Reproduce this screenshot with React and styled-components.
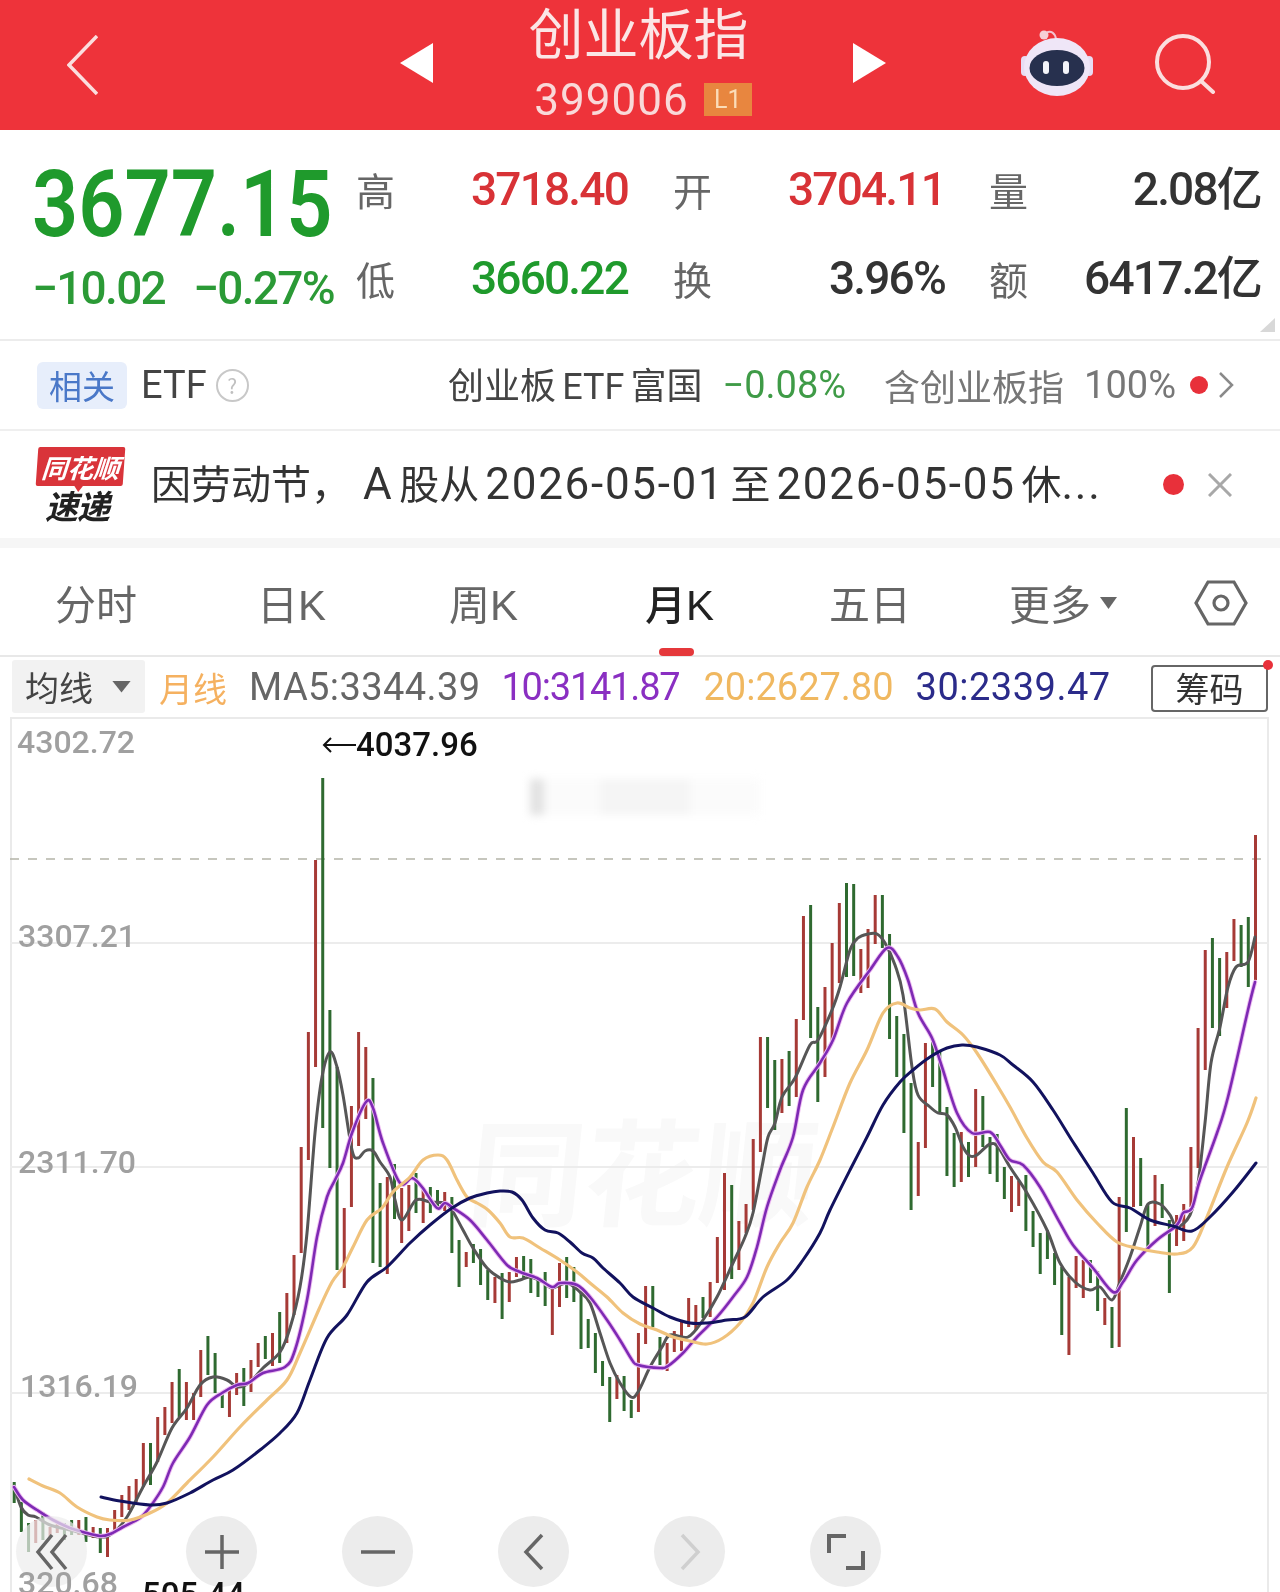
import React from "react";
import styled, { createGlobalStyle } from "styled-components";

const CJK = `"Noto Sans CJK SC", "Noto Sans", sans-serif`;
const NUM = `"Roboto", "Liberation Sans", "Noto Sans CJK SC", sans-serif`;

const Global = createGlobalStyle`
  html, body { margin: 0; padding: 0; background: #fff; }
  body { font-family: ${CJK}; }
`;

const Page = styled.div`
  width: 1280px;
  height: 1592px;
  overflow: hidden;
  background: #fff;
  position: relative;
  filter: blur(0.35px);
`;

/* ---------- Header ---------- */
const Header = styled.header`
  height: 130px;
  background: #ee333a;
  display: flex;
  align-items: center;
  color: #fbe6e6;
`;
const HeadIcon = styled.svg`
  display: block;
  flex: none;
  margin-left: ${(p) => p.$ml}px;
  margin-top: ${(p) => p.$mt || 0}px;
`;
const TitleBlock = styled.div`
  width: 420px;
  height: 130px;
  flex: none;
  display: flex;
  flex-direction: column;
  align-items: center;
  box-sizing: border-box;
`;
const Title = styled.div`
  font-size: 55px;
  line-height: 60px;
  margin-left: -9px;
  color: #fbe6e6;
  font-weight: 400;
`;
const CodeRow = styled.div`
  display: flex;
  align-items: flex-start;
  margin-top: 22px;
  gap: 15px;
`;
const Code = styled.span`
  font-family: ${NUM};
  font-size: 44px;
  line-height: 36px;
  letter-spacing: 1px;
  color: #f9d9d9;
`;
const Level = styled.span`
  width: 48px;
  height: 33px;
  margin-top: 1px;
  background: #e8863f;
  color: #fbdcb8;
  font-family: ${NUM};
  font-size: 25px;
  line-height: 33px;
  text-align: center;
`;

/* ---------- Quote ---------- */
const Quote = styled.section`
  height: 211px;
  box-sizing: border-box;
  border-bottom: 2px solid #ececec;
  display: flex;
  position: relative;
`;
const PriceBlock = styled.div`
  width: 352px;
  flex: none;
  padding: 28px 0 0 32px;
  box-sizing: border-box;
`;
const Price = styled.div`
  font-family: ${NUM};
  font-weight: 600;
  font-size: 92px;
  line-height: 94px;
  color: #1f9a2c;
  white-space: nowrap;
  transform: scaleX(0.88);
  transform-origin: left center;
`;
const Change = styled.div`
  display: flex;
  gap: 28px;
  margin-top: 16px;
  font-family: ${NUM};
  font-size: 46px;
  line-height: 40px;
  letter-spacing: -1.7px;
  font-weight: 500;
  color: #2b9a36;
  white-space: nowrap;
`;
const Stats = styled.div`
  display: grid;
  grid-template-columns: 43px 233px 84px 233px 83px 233px;
  grid-auto-rows: 89px;
  padding-top: 14px;
  align-items: center;
`;
const StatLabel = styled.span`
  font-size: 39px;
  color: #666;
  text-align: right;
  line-height: 44px;
`;
const StatValue = styled.span`
  font-family: ${NUM};
  font-size: 46px;
  font-weight: 500;
  line-height: 50px;
  letter-spacing: -1.8px;
  text-align: right;
  white-space: nowrap;
  color: ${(p) => p.$color};
`;
const Corner = styled.i`
  position: absolute;
  right: 5px;
  bottom: 7px;
  width: 15px;
  height: 14px;
  background: #d8d8d8;
  clip-path: polygon(100% 0, 100% 100%, 0 100%);
`;

/* ---------- ETF row ---------- */
const EtfRow = styled.section`
  height: 90px;
  box-sizing: border-box;
  border-bottom: 2px solid #efefef;
  display: flex;
  align-items: center;
  padding: 0 46px 0 37px;
  font-size: 36px;
  white-space: nowrap;
`;
const Tag = styled.span`
  width: 90px;
  height: 47px;
  border-radius: 6px;
  background: #e7eefb;
  color: #4a78c8;
  font-size: 33px;
  line-height: 47px;
  text-align: center;
`;
const EtfText = styled.span`
  color: ${(p) => p.$color || "#444"};
  margin-left: ${(p) => p.$ml || 0}px;
  font-family: ${(p) => (p.$num ? NUM : CJK)};
  font-size: ${(p) => (p.$num ? 38 : 36)}px;
  line-height: 44px;
`;
const Help = styled.span`
  width: 29px;
  height: 29px;
  border: 2px solid #c8c8c8;
  border-radius: 50%;
  margin-left: 9px;
  color: #c0c0c0;
  font-size: 21px;
  line-height: 29px;
  text-align: center;
`;
const RedDot = styled.i`
  display: block;
  flex: none;
  width: ${(p) => p.$size}px;
  height: ${(p) => p.$size}px;
  border-radius: 50%;
  background: #e8303a;
  margin-left: ${(p) => p.$ml || 0}px;
`;
const FundGroup = styled.div`
  margin-left: auto;
  display: flex;
  align-items: center;
`;
const FundLatin = styled.span`
  font-family: ${NUM};
  font-size: 36px;
  margin: 0 -2px;
`;

/* ---------- News row ---------- */
const NewsRow = styled.section`
  height: 117px;
  box-sizing: border-box;
  border-bottom: 10px solid #f6f6f6;
  display: flex;
  align-items: center;
  padding-left: 37px;
`;
const Logo = styled.div`
  width: 87px;
  flex: none;
  display: flex;
  flex-direction: column;
  align-items: center;
  margin-top: -2px;
`;
const LogoFlag = styled.div`
  width: 87px;
  height: 39px;
  background: #d9343a;
  color: #fff;
  font-size: 26px;
  font-weight: 700;
  font-style: italic;
  line-height: 39px;
  text-align: center;
  border-radius: 2px;
  transform: skewX(-4deg);
  position: relative;
  &::after {
    content: "";
    position: absolute;
    left: 38px;
    bottom: -6px;
    width: 10px;
    height: 7px;
    background: #d9343a;
    clip-path: polygon(0 0, 100% 0, 50% 100%);
  }
`;
const LogoText = styled.div`
  font-size: 33px;
  font-weight: 700;
  font-style: italic;
  color: #222;
  line-height: 32px;
  margin: 3px 7px 0 0;
  letter-spacing: -1px;
`;
const NewsText = styled.div`
  margin-left: 27px;
  margin-top: -4px;
  width: 985px;
  font-size: 40px;
  color: #333;
  line-height: 50px;
  white-space: nowrap;
  word-spacing: -3px;
`;
const NewsNum = styled.span`
  font-family: ${NUM};
  font-size: 44px;
  letter-spacing: 1.7px;
  margin-left: ${(p) => p.$ml || 0}px;
`;

/* ---------- Tabs ---------- */
const Tabs = styled.nav`
  height: 109px;
  box-sizing: border-box;
  border-bottom: 2px solid #e8e8e8;
  display: flex;
  align-items: flex-start;
  padding-top: 30px;
`;
const Tab = styled.div`
  position: relative;
  flex: none;
  width: ${(p) => p.$w}px;
  margin-left: ${(p) => p.$ml}px;
  font-size: 41px;
  line-height: 48px;
  white-space: nowrap;
  color: ${(p) => (p.$active ? "#222" : "#666")};
  font-weight: ${(p) => (p.$active ? 500 : 400)};
`;
const TabLatin = styled.span`
  font-family: "Liberation Sans", sans-serif;
  font-size: 42px;
`;
const Underline = styled.i`
  position: absolute;
  left: 14px;
  top: 70px;
  width: 35px;
  height: 8px;
  border-radius: 4px;
  background: #e5383b;
`;
const Caret = styled.i`
  position: absolute;
  right: 2px;
  top: 19px;
  width: 17px;
  height: 12px;
  background: #666;
  clip-path: polygon(0 0, 100% 0, 50% 100%);
`;

/* ---------- MA bar ---------- */
const MaBar = styled.div`
  height: 60px;
  display: flex;
  align-items: center;
  position: relative;
`;
const MaSelect = styled.div`
  position: relative;
  width: 133px;
  height: 53px;
  margin-left: 12px;
  margin-top: -2px;
  background: #f2f2f2;
  border-radius: 3px;
  color: #444;
  font-size: 34px;
  line-height: 53px;
  padding-left: 13px;
  box-sizing: border-box;
  &::after {
    content: "";
    position: absolute;
    left: 100px;
    top: 21px;
    width: 19px;
    height: 12px;
    background: #666;
    clip-path: polygon(0 0, 100% 0, 50% 100%);
  }
`;
const MaValue = styled.span`
  margin-left: ${(p) => p.$ml}px;
  color: ${(p) => p.$color};
  font-family: ${(p) => (p.$cjk ? CJK : NUM)};
  font-size: ${(p) => (p.$cjk ? 34 : 38)}px;
  white-space: nowrap;
  letter-spacing: ${(p) => p.$ls || 0}px;
`;
const ChipButton = styled.div`
  position: absolute;
  left: 1151px;
  top: 8px;
  width: 117px;
  height: 47px;
  box-sizing: border-box;
  border: 2px solid #666;
  border-radius: 4px;
  text-align: center;
  font-size: 34px;
  line-height: 42px;
  color: #333;
  &::after {
    content: "";
    position: absolute;
    right: -7px;
    top: -7px;
    width: 10px;
    height: 10px;
    border-radius: 50%;
    background: #e8303a;
  }
`;

/* ---------- Chart ---------- */
const ChartBox = styled.section`
  position: relative;
  margin-left: 10px;
  width: 1259px;
  height: 875px;
  box-sizing: border-box;
  border: 2px solid #eaeaea;
  border-bottom: 0;
`;
const ChartSvg = styled.svg`
  position: absolute;
  left: -2px;
  top: -2px;
  width: 1259px;
  height: 875px;
  display: block;
`;
const Watermark = styled.div`
  position: absolute;
  left: 458px;
  top: 382px;
  font-size: 116px;
  line-height: 130px;
  font-weight: 700;
  color: #f9f9f9;
  white-space: nowrap;
  transform: skewX(-6deg);
`;
const Smudge = styled.div`
  position: absolute;
  left: 518px;
  top: 60px;
  width: 230px;
  height: 36px;
  filter: blur(4px);
  background: linear-gradient(
    90deg,
    #e2e2e2 0 14px,
    #fbfbfb 14px 70px,
    #f5f5f5 70px 160px,
    #fbfbfb 160px 230px
  );
`;
const AxisLabel = styled.span`
  position: absolute;
  left: ${(p) => p.$left}px;
  top: ${(p) => p.$top}px;
  font-family: ${NUM};
  font-size: 32px;
  font-weight: 500;
  line-height: 36px;
  color: #a0a0a0;
  white-space: nowrap;
`;
const PeakLabel = styled.span`
  position: absolute;
  left: ${(p) => p.$left}px;
  top: ${(p) => p.$top}px;
  display: flex;
  align-items: center;
  font-family: ${NUM};
  font-size: 33px;
  font-weight: 500;
  line-height: 36px;
  color: #111;
  white-space: nowrap;
`;
const Controls = styled.div`
  position: absolute;
  left: 4px;
  top: 797px;
  display: flex;
  gap: 85px;
`;
const RoundButton = styled.button`
  width: 71px;
  height: 71px;
  padding: 0;
  border: 0;
  border-radius: 50%;
  margin-right: ${(p) => p.$mr || 0}px;
  background: rgba(236, 236, 236, ${(p) => p.$alpha || 1});
  display: flex;
  align-items: center;
  justify-content: center;
`;

/* ---------- Data ---------- */
const B = [
  [1482,1503,"g"],[1502,1532,"g"],[1523,1552,"g"],[1520,1543,"r"],[1512,1540,"g"],[1527,1538,"r"],[1522,1533,"r"],[1523,1540,"g"],[1520,1535,"g"],[1520,1535,"r"],
  [1517,1542,"g"],[1527,1538,"r"],[1528,1553,"g"],[1528,1557,"r"],[1510,1532,"r"],[1495,1517,"r"],[1486,1510,"r"],[1479,1502,"r"],[1443,1487,"r"],[1443,1485,"g"],
  [1417,1462,"r"],[1407,1435,"r"],[1382,1423,"r"],[1369,1417,"g"],[1382,1420,"r"],[1393,1420,"r"],[1350,1397,"r"],[1336,1375,"g"],[1353,1393,"g"],[1393,1408,"g"],
  [1390,1417,"r"],[1373,1395,"r"],[1368,1406,"g"],[1360,1392,"r"],[1343,1367,"r"],[1336,1359,"g"],[1333,1366,"r"],[1312,1363,"g"],[1293,1343,"r"],[1255,1315,"r"],
  [1147,1253,"r"],[1032,1160,"r"],[860,1067,"r"],[778,1128,"g"],[1010,1168,"g"],[1067,1270,"g"],[1208,1288,"r"],[1106,1207,"r"],[1032,1146,"r"],[1047,1119,"r"],
  [1078,1263,"g"],[1183,1267,"g"],[1177,1274,"r"],[1164,1219,"g"],[1188,1243,"r"],[1185,1231,"r"],[1173,1213,"g"],[1190,1223,"r"],[1187,1213,"g"],[1190,1207,"g"],
  [1192,1211,"r"],[1197,1253,"g"],[1240,1287,"g"],[1252,1267,"r"],[1244,1263,"g"],[1249,1285,"g"],[1270,1300,"g"],[1277,1303,"r"],[1273,1319,"g"],[1272,1302,"r"],
  [1257,1277,"r"],[1256,1278,"g"],[1259,1293,"g"],[1280,1297,"g"],[1272,1306,"g"],[1287,1335,"r"],[1263,1307,"r"],[1257,1298,"g"],[1267,1302,"g"],[1293,1349,"g"],
  [1319,1348,"g"],[1333,1373,"g"],[1361,1386,"g"],[1377,1422,"g"],[1375,1399,"r"],[1376,1411,"g"],[1400,1418,"g"],[1333,1412,"r"],[1286,1344,"r"],[1286,1327,"g"],
  [1337,1365,"g"],[1343,1371,"r"],[1331,1352,"r"],[1320,1351,"r"],[1298,1327,"r"],[1305,1330,"r"],[1297,1318,"g"],[1282,1317,"r"],[1237,1283,"r"],[1173,1290,"r"],
  [1185,1279,"g"],[1221,1270,"r"],[1204,1233,"r"],[1139,1210,"r"],[1037,1152,"r"],[1037,1108,"g"],[1060,1130,"g"],[1059,1113,"r"],[1051,1106,"g"],[1019,1097,"r"],
  [916,1020,"r"],[905,1038,"g"],[1007,1102,"g"],[987,1077,"r"],[943,1042,"r"],[903,983,"r"],[883,977,"g"],[884,976,"g"],[949,993,"r"],[929,988,"r"],
  [895,944,"r"],[895,948,"g"],[934,1039,"g"],[1016,1077,"g"],[1034,1133,"g"],[1083,1210,"g"],[1142,1196,"r"],[1043,1148,"r"],[1042,1087,"g"],[1052,1112,"g"],
  [1107,1176,"g"],[1133,1187,"g"],[1132,1182,"r"],[1142,1177,"g"],[1089,1167,"r"],[1096,1147,"g"],[1137,1174,"g"],[1134,1182,"g"],[1167,1199,"g"],[1176,1212,"r"],
  [1181,1206,"r"],[1175,1231,"g"],[1211,1247,"g"],[1233,1274,"g"],[1230,1259,"g"],[1253,1285,"g"],[1267,1335,"g"],[1277,1355,"r"],[1256,1288,"r"],[1260,1298,"r"],
  [1260,1283,"g"],[1271,1311,"g"],[1298,1325,"r"],[1307,1348,"g"],[1197,1347,"r"],[1108,1232,"g"],[1137,1207,"r"],[1158,1206,"g"],[1205,1248,"g"],[1175,1226,"r"],
  [1184,1218,"g"],[1220,1293,"g"],[1215,1246,"r"],[1204,1241,"r"],[1147,1207,"r"],[1028,1168,"r"],[950,1070,"r"],[938,1028,"g"],[958,1036,"g"],[952,1008,"r"],
  [919,961,"r"],[925,967,"g"],[917,987,"g"],[835,980,"r"],
];

const MA5 = [[14,1487],[21,1507],[28,1515],[36,1517],[50,1525],[70,1530],[100,1537],[113,1533],[127,1517],[143,1487],[157,1462],[172,1428],[187,1408],[200,1385],[213,1377],[227,1380],[238,1387],[250,1382],[263,1368],[280,1352],[290,1328],[300,1287],[307,1233],[315,1133],[322,1077],[330,1052],[337,1067],[343,1095],[352,1150],[358,1158],[365,1151],[373,1151],[380,1162],[390,1177],[395,1200],[402,1220],[416,1200],[430,1202],[445,1203],[452,1210],[463,1230],[473,1248],[487,1268],[500,1278],[510,1282],[520,1280],[530,1277],[543,1282],[552,1288],[567,1283],[580,1292],[590,1303],[600,1333],[610,1363],[620,1383],[631,1397],[638,1392],[650,1367],[662,1347],[670,1335],[688,1337],[703,1320],[717,1297],[733,1263],[745,1237],[753,1213],[762,1167],[768,1137],[775,1123],[782,1097],[795,1078],[810,1045],[818,1040],[832,1010],[840,987],[850,950],[858,938],[868,934],[877,934],[885,943],[895,965],[903,995],[912,1067],[918,1095],[930,1107],[938,1113],[947,1115],[955,1127],[963,1147],[970,1156],[977,1155],[990,1144],[998,1147],[1010,1167],[1027,1193],[1047,1230],[1060,1263],[1075,1282],[1090,1290],[1100,1287],[1112,1300],[1120,1282],[1130,1257],[1140,1227],[1148,1204],[1160,1204],[1170,1215],[1177,1227],[1190,1215],[1198,1183],[1205,1123],[1211,1063],[1220,1027],[1228,987],[1236,967],[1248,962],[1255,937]];
const MA10 = [[14,1487],[23,1500],[37,1510],[53,1520],[70,1528],[83,1532],[100,1536],[110,1534],[123,1527],[140,1518],[150,1507],[163,1487],[173,1463],[190,1437],[207,1405],[222,1393],[237,1385],[248,1383],[263,1373],[285,1367],[295,1350],[307,1300],[317,1237],[327,1197],[335,1180],[343,1163],[352,1133],[366,1102],[373,1108],[383,1143],[400,1183],[412,1178],[422,1187],[437,1208],[445,1203],[453,1208],[470,1220],[487,1240],[507,1265],[520,1272],[537,1278],[552,1287],[560,1283],[577,1285],[590,1297],[607,1320],[620,1340],[632,1360],[638,1365],[660,1368],[668,1366],[683,1353],[697,1337],[717,1317],[733,1297],[747,1277],[757,1247],[767,1207],[780,1170],[793,1137],[803,1090],[820,1063],[833,1040],[847,1003],[870,970],[887,948],[898,957],[908,980],[918,1013],[932,1038],[942,1067],[957,1113],[972,1133],[990,1132],[1000,1145],[1010,1160],[1023,1165],[1040,1187],[1060,1223],[1073,1245],[1093,1268],[1113,1292],[1123,1282],[1137,1260],[1157,1240],[1177,1225],[1183,1213],[1192,1208],[1200,1180],[1217,1133],[1228,1097],[1248,1010],[1255,982]];
const MA20 = [[29,1479],[43,1486],[60,1493],[77,1507],[97,1517],[110,1520],[130,1520],[150,1513],[167,1503],[187,1483],[213,1457],[240,1427],[267,1400],[287,1380],[300,1353],[320,1307],[332,1282],[343,1267],[353,1247],[367,1220],[382,1208],[393,1192],[410,1177],[423,1160],[438,1155],[447,1160],[457,1180],[467,1197],[477,1203],[488,1210],[500,1223],[510,1237],[523,1238],[540,1248],[560,1260],[577,1272],[590,1283],[607,1297],[623,1313],[640,1324],[657,1330],[673,1337],[690,1341],[707,1344],[723,1338],[740,1323],[753,1303],[767,1267],[780,1243],[793,1223],[807,1187],[820,1160],[833,1127],[850,1083],[867,1050],[883,1013],[897,1003],[910,1008],[920,1010],[935,1009],[947,1022],[963,1035],[977,1053],[997,1085],[1010,1107],[1027,1138],[1043,1162],[1057,1172],[1077,1200],[1097,1223],[1117,1242],[1137,1248],[1157,1252],[1177,1254],[1193,1247],[1207,1217],[1227,1167],[1247,1123],[1256,1098]];
const MA30 = [[101,1497],[120,1501],[150,1505],[167,1503],[190,1493],[213,1480],[233,1470],[260,1450],[280,1433],[297,1413],[310,1380],[327,1338],[347,1315],[367,1282],[387,1267],[410,1243],[430,1225],[452,1208],[470,1198],[487,1193],[500,1191],[512,1192],[522,1200],[533,1218],[545,1230],[558,1233],[570,1242],[582,1253],[593,1258],[603,1268],[620,1283],[633,1297],[653,1308],[670,1317],[690,1323],[707,1323],[727,1320],[745,1317],[763,1297],[787,1280],[803,1260],[820,1233],[830,1210],[850,1170],[867,1137],[883,1105],[900,1082],[913,1070],[930,1057],[947,1048],[962,1045],[977,1047],[1000,1055],[1013,1065],[1033,1082],[1053,1110],[1073,1142],[1093,1173],[1112,1202],[1130,1208],[1150,1220],[1173,1226],[1192,1231],[1210,1217],[1233,1192],[1256,1163]];

const smooth = (a) => {
  let d = `M${a[0][0]} ${a[0][1]}`;
  for (let i = 0; i < a.length - 1; i++) {
    const p0 = a[i - 1] || a[i];
    const p1 = a[i];
    const p2 = a[i + 1];
    const p3 = a[i + 2] || p2;
    const c1x = p1[0] + (p2[0] - p0[0]) / 6;
    const c1y = p1[1] + (p2[1] - p0[1]) / 6;
    const c2x = p2[0] - (p3[0] - p1[0]) / 6;
    const c2y = p2[1] - (p3[1] - p1[1]) / 6;
    d += `C${c1x.toFixed(1)} ${c1y.toFixed(1)} ${c2x.toFixed(1)} ${c2y.toFixed(1)} ${p2[0]} ${p2[1]}`;
  }
  return d;
};

const Line = ({ data, color, width = 3 }) => (
  <path d={smooth(data)} fill="none" stroke={color} strokeWidth={width} strokeLinejoin="round" strokeLinecap="round" />
);

const Chart = () => (
  <ChartSvg viewBox="10 717 1259 875">
    {[943, 1167, 1393].map((y) => (
      <line key={y} x1="10" x2="1269" y1={y} y2={y} stroke="#ececec" strokeWidth="2" />
    ))}
    <line x1="10" x2="1269" y1="859" y2="859" stroke="#b4b4a8" strokeWidth="1.5" strokeDasharray="9 9" />
    {B.map(([t, b, c], i) => {
      const x = 14.2 + i * 7.175;
      return <line key={i} x1={x} x2={x} y1={t} y2={b} stroke={c === "r" ? "#a63a36" : "#2f6a30"} strokeWidth="3" />;
    })}
    <Line data={MA5} color="#565656" />
    <Line data={MA10} color="#eebcf2" width={4.5} />
    <Line data={MA10} color="#7e2ab4" width={2.6} />
    <Line data={MA20} color="#f0c27c" width={3.2} />
    <Line data={MA30} color="#12125e" />
  </ChartSvg>
);

const Ico = ({ d, color = "#666", w = 3.5, size = 40 }) => (
  <svg width={size} height={size} viewBox="0 0 40 40" fill="none" stroke={color} strokeWidth={w} strokeLinecap="butt" strokeLinejoin="miter">
    <path d={d} />
  </svg>
);

export default function App() {
  return (
    <Page>
      <Global />
      <Header>
        <HeadIcon $ml={67} width="31" height="60" viewBox="0 0 31 60" fill="none" stroke="#fbdede" strokeWidth="3.5">
          <path d="M30 1 L2 30 L30 59" />
        </HeadIcon>
        <HeadIcon $ml={302} $mt={-5} width="33" height="40" viewBox="0 0 33 40" fill="#fff">
          <path d="M33 0 V40 L0 20 Z" />
        </HeadIcon>
        <TitleBlock>
          <Title>创业板指</Title>
          <CodeRow>
            <Code>399006</Code>
            <Level>L1</Level>
          </CodeRow>
        </TitleBlock>
        <HeadIcon $ml={0} $mt={-5} width="33" height="40" viewBox="0 0 33 40" fill="#fff">
          <path d="M0 0 V40 L33 20 Z" />
        </HeadIcon>
        <HeadIcon $ml={134} $mt={-3} width="74" height="68" viewBox="0 0 74 68">
          <path d="M26 3 C31 0 35 3 36 9" fill="none" stroke="#f3c3d0" strokeWidth="2" />
          <circle cx="24" cy="5" r="4.5" fill="#f6cfd6" />
          <rect x="1" y="26" width="8" height="20" rx="4" fill="#e8dcf3" />
          <rect x="65" y="26" width="8" height="20" rx="4" fill="#e8dcf3" />
          <ellipse cx="37" cy="37" rx="33" ry="29" fill="#efe6f7" />
          <ellipse cx="37" cy="38" rx="27.5" ry="18" fill="#27304e" />
          <rect x="23" y="31" width="6" height="13" rx="3" fill="#f4f4fa" />
          <rect x="43" y="31" width="6" height="13" rx="3" fill="#f4f4fa" />
        </HeadIcon>
        <HeadIcon $ml={61} $mt={-3} width="62" height="60" viewBox="0 0 62 60" fill="none" stroke="#fbdede" strokeWidth="4">
          <circle cx="28" cy="28" r="26" />
          <path d="M46 47 L58 58" strokeLinecap="round" />
        </HeadIcon>
      </Header>

      <Quote>
        <PriceBlock>
          <Price>3677.15</Price>
          <Change>
            <span>−10.02</span>
            <span>−0.27%</span>
          </Change>
        </PriceBlock>
        <Stats>
          <StatLabel>高</StatLabel>
          <StatValue $color="#d83236">3718.40</StatValue>
          <StatLabel>开</StatLabel>
          <StatValue $color="#d83236">3704.11</StatValue>
          <StatLabel>量</StatLabel>
          <StatValue $color="#333">2.08亿</StatValue>
          <StatLabel>低</StatLabel>
          <StatValue $color="#1f9a2c">3660.22</StatValue>
          <StatLabel>换</StatLabel>
          <StatValue $color="#333">3.96%</StatValue>
          <StatLabel>额</StatLabel>
          <StatValue $color="#333">6417.2亿</StatValue>
        </Stats>
        <Corner />
      </Quote>

      <EtfRow>
        <Tag>相关</Tag>
        <EtfText $ml={14} $num>ETF</EtfText>
        <Help>?</Help>
        <FundGroup>
          <EtfText>创业板 <FundLatin>ETF</FundLatin> 富国</EtfText>
          <EtfText $ml={20} $color="#3f9b47" $num>−0.08%</EtfText>
          <EtfText $ml={38} $color="#777">含创业板指</EtfText>
          <EtfText $ml={20} $color="#777" $num>100%</EtfText>
          <RedDot $size={18} $ml={14} />
          <HeadIcon $ml={11} width="15" height="26" viewBox="0 0 15 26" fill="none" stroke="#8a8a8a" strokeWidth="2.5">
            <path d="M1 1 L13 13 L1 25" />
          </HeadIcon>
        </FundGroup>
      </EtfRow>

      <NewsRow>
        <Logo>
          <LogoFlag>同花顺</LogoFlag>
          <LogoText>速递</LogoText>
        </Logo>
        <NewsText>
          因劳动节，<NewsNum $ml={12}>A</NewsNum> 股从 <NewsNum>2026-05-01</NewsNum> 至 <NewsNum>2026-05-05</NewsNum> 休<NewsNum>...</NewsNum>
        </NewsText>
        <RedDot $size={21} $ml={27} />
        <HeadIcon $ml={24} width="24" height="24" viewBox="0 0 24 24" fill="none" stroke="#a8a8a8" strokeWidth="3">
          <path d="M1 1 L23 23 M23 1 L1 23" />
        </HeadIcon>
      </NewsRow>

      <Tabs>
        <Tab $ml={55} $w={82}>分时</Tab>
        <Tab $ml={120} $w={66}>日<TabLatin>K</TabLatin></Tab>
        <Tab $ml={126} $w={70}>周<TabLatin>K</TabLatin></Tab>
        <Tab $ml={126} $w={68} $active>
          月<TabLatin>K</TabLatin>
          <Underline />
        </Tab>
        <Tab $ml={116} $w={79}>五日</Tab>
        <Tab $ml={101} $w={110}>
          更多
          <Caret />
        </Tab>
        <HeadIcon $ml={75} $mt={2} width="54" height="46" viewBox="0 0 54 46" fill="none" stroke="#666" strokeWidth="3.2">
          <path d="M14 2 H40 L52 23 L40 44 H14 L2 23 Z" />
          <circle cx="27" cy="23" r="7" />
        </HeadIcon>
      </Tabs>

      <MaBar>
        <MaSelect>均线</MaSelect>
        <MaValue $ml={14} $cjk $color="#f5b160">月线</MaValue>
        <MaValue $ml={22} $ls={0.4} $color="#666">MA5:3344.39</MaValue>
        <MaValue $ml={21} $ls={-1.2} $color="#8a2fc2">10:3141.87</MaValue>
        <MaValue $ml={24} $color="#f0b860">20:2627.80</MaValue>
        <MaValue $ml={22} $ls={0.5} $color="#2b2b8a">30:2339.47</MaValue>
        <ChipButton>筹码</ChipButton>
      </MaBar>

      <ChartBox>
        <Watermark>同花顺</Watermark>
        <Smudge />
        <Chart />
        <AxisLabel $left={5} $top={5}>4302.72</AxisLabel>
        <AxisLabel $left={6} $top={199}>3307.21</AxisLabel>
        <AxisLabel $left={6} $top={425}>2311.70</AxisLabel>
        <AxisLabel $left={8} $top={649}>1316.19</AxisLabel>
        <PeakLabel $left={310} $top={8}>
          <svg width="34" height="16" viewBox="0 0 34 16" fill="none" stroke="#111" strokeWidth="2">
            <path d="M34 8 H2 M9 1 L2 8 L9 15" />
          </svg>
          4037.96
        </PeakLabel>
        <Controls>
          <RoundButton $alpha={0.7} $mr={14}>
            <Ico d="M20 3 L6 20 L20 37 M34 3 L20 20 L34 37" w={3.5} />
          </RoundButton>
          <RoundButton><Ico d="M3 20 H37 M20 3 V37" /></RoundButton>
          <RoundButton><Ico d="M3 20 H37" /></RoundButton>
          <RoundButton><Ico d="M28 3 L12 20 L28 37" /></RoundButton>
          <RoundButton><Ico d="M12 3 L28 20 L12 37" color="#cfcfcf" /></RoundButton>
          <RoundButton><Ico d="M20 4 H3 V21 M20 36 H37 V19" size={40} w={4} /></RoundButton>
        </Controls>
        <AxisLabel $left={6} $top={846}>320.68</AxisLabel>
        <PeakLabel $left={130} $top={858}>505.44</PeakLabel>
      </ChartBox>
    </Page>
  );
}
